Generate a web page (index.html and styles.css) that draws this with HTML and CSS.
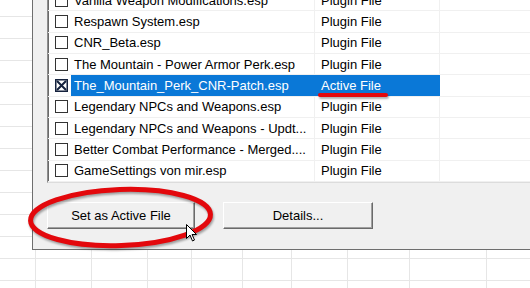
FILE: index.html
```html
<!DOCTYPE html>
<html lang="en">
<head>
    <meta charset="UTF-8">
    <title>Plugin Files</title>
    <link rel="stylesheet" href="styles.css">
</head>
<body>
    <div class="screen">
        <div class="dialog">
            <!-- Lista de plugins -->
            <div class="list">
                <div class="row">
                    <span class="check"><span class="box"></span></span>
                    <span class="name">Vanilla Weapon Modifications.esp</span>
                    <span class="type">Plugin File</span>
                    <span class="rest"></span>
                </div>
                <div class="row">
                    <span class="check"><span class="box"></span></span>
                    <span class="name">Respawn System.esp</span>
                    <span class="type">Plugin File</span>
                    <span class="rest"></span>
                </div>
                <div class="row">
                    <span class="check"><span class="box"></span></span>
                    <span class="name">CNR_Beta.esp</span>
                    <span class="type">Plugin File</span>
                    <span class="rest"></span>
                </div>
                <div class="row">
                    <span class="check"><span class="box"></span></span>
                    <span class="name">The Mountain - Power Armor Perk.esp</span>
                    <span class="type">Plugin File</span>
                    <span class="rest"></span>
                </div>
                <div class="row selected">
                    <span class="check">
                        <svg class="box-active" width="13" height="13" viewBox="0 0 13 13">
                            <rect x="0.75" y="0.75" width="11.5" height="11.5" fill="#fff" stroke="#14213d" stroke-width="1.5"/>
                            <path d="M2 2 L11 11 M11 2 L2 11" stroke="#14213d" stroke-width="2"/>
                        </svg>
                    </span>
                    <span class="name">The_Mountain_Perk_CNR-Patch.esp</span>
                    <span class="type">Active File</span>
                    <span class="rest"></span>
                </div>
                <div class="row">
                    <span class="check"><span class="box"></span></span>
                    <span class="name">Legendary NPCs and Weapons.esp</span>
                    <span class="type">Plugin File</span>
                    <span class="rest"></span>
                </div>
                <div class="row">
                    <span class="check"><span class="box"></span></span>
                    <span class="name">Legendary NPCs and Weapons - Updt...</span>
                    <span class="type">Plugin File</span>
                    <span class="rest"></span>
                </div>
                <div class="row">
                    <span class="check"><span class="box"></span></span>
                    <span class="name">Better Combat Performance - Merged....</span>
                    <span class="type">Plugin File</span>
                    <span class="rest"></span>
                </div>
                <div class="row">
                    <span class="check"><span class="box"></span></span>
                    <span class="name">GameSettings von mir.esp</span>
                    <span class="type">Plugin File</span>
                    <span class="rest"></span>
                </div>
            </div>

            <!-- Botões -->
            <div class="buttons">
                <button class="btn btn-set">Set as Active File</button>
                <button class="btn btn-details">Details...</button>
            </div>
        </div>

        <!-- Marcações vermelhas por cima -->
        <div class="mark-line"></div>
        <svg class="mark-ellipse" width="200" height="72" viewBox="0 0 200 72">
            <ellipse cx="98.5" cy="35.5" rx="90" ry="28" fill="none" stroke="#e3080c" stroke-width="5" transform="rotate(-2 98.5 35.5)"/>
        </svg>
        <svg class="cursor" width="12" height="19" viewBox="0 0 12 19">
            <path d="M0.5 0.5 L0.5 14.5 L4 11 L6.5 17 L8.5 16 L6 10.5 L10.5 10.5 Z" fill="#fff" stroke="#000" stroke-width="1"/>
        </svg>
    </div>
</body>
</html>
```

FILE: styles.css
```css
body {
    margin: 0;
    font-family: "Liberation Sans", Arial, sans-serif;
    font-size: 13px;
    color: #000;
    background: #fff;
}

.screen {
    position: relative;
    width: 530px;
    height: 288px;
    overflow: hidden;
    background-color: #fff;
    /* grade da planilha atrás */
    background-image:
        linear-gradient(to right,
            transparent 35px, #e6e6e6 35px 36px,
            transparent 36px 91px, #e6e6e6 91px 92px,
            transparent 92px 147px, #e6e6e6 147px 148px,
            transparent 148px 191px, #e6e6e6 191px 192px,
            transparent 192px 242px, #e6e6e6 242px 243px,
            transparent 243px 291px, #e6e6e6 291px 292px,
            transparent 292px 347px, #e6e6e6 347px 348px,
            transparent 348px 409px, #e6e6e6 409px 410px,
            transparent 410px 486px, #e6e6e6 486px 487px,
            transparent 487px),
        repeating-linear-gradient(to bottom,
            transparent 0 16px, #e6e6e6 16px 17px, transparent 17px 22px);
}

.dialog {
    width: 520px;
    margin: -20px 0 0 32px;
    padding: 8px 0 20px 14px;
    background-color: #f0f0f0;
    border-left: 1px solid #6e6e6e;
    border-bottom: 1px solid #6e6e6e;
}

.list {
    background-color: #fff;
    border-top: 2px solid #a0a0a0;
    border-left: 1px solid #8e8e8e;
    border-bottom: 1px solid #dcdcdc;
    box-shadow: inset 1px 0 0 #6a6a6a;
}

.row {
    display: flex;
    height: 21.33px;
    box-sizing: border-box;
    border-bottom: 1px solid #f0f0f0;
}

.row > span {
    display: flex;
    align-items: center;
    box-sizing: border-box;
    white-space: nowrap;
    overflow: hidden;
}

.check {
    width: 23px;
    padding-left: 7px;
}

.box {
    width: 13px;
    height: 13px;
    box-sizing: border-box;
    border: 1px solid #333;
    background-color: #fff;
}

.box-active {
    display: block;
}

.name {
    width: 244px;
    padding-left: 3px;
    border-right: 1px solid #f0f0f0;
}

.type {
    width: 125px;
    padding-left: 6px;
    border-right: 1px solid #f0f0f0;
}

.rest {
    flex: 1;
}

.row.selected .name,
.row.selected .type {
    background-color: #0a78d7;
    color: #fff;
    border-right-color: #0a78d7;
}

.buttons {
    display: flex;
    gap: 28px;
    margin-top: 19px;
}

.btn {
    height: 27px;
    padding: 0;
    font-family: "Liberation Sans", Arial, sans-serif;
    font-size: 13px;
    color: #000;
    background-color: #f0f0f0;
    border: 1px solid;
    border-color: #fff #6a6a6a #6a6a6a #fff;
    box-shadow: inset -1px -1px 0 #a0a0a0;
}

.btn-set {
    width: 148px;
}

.btn-details {
    width: 150px;
}

.mark-line {
    position: absolute;
    left: 318px;
    top: 93px;
    width: 70px;
    height: 4px;
    border-radius: 2px;
    background-color: #e3080c;
    box-shadow: 1px 2px 2px rgba(0, 0, 0, 0.3);
}

.mark-ellipse {
    position: absolute;
    left: 22px;
    top: 182px;
    filter: drop-shadow(1px 2px 1px rgba(0, 0, 0, 0.35));
}

.cursor {
    position: absolute;
    left: 186px;
    top: 224px;
}
```
